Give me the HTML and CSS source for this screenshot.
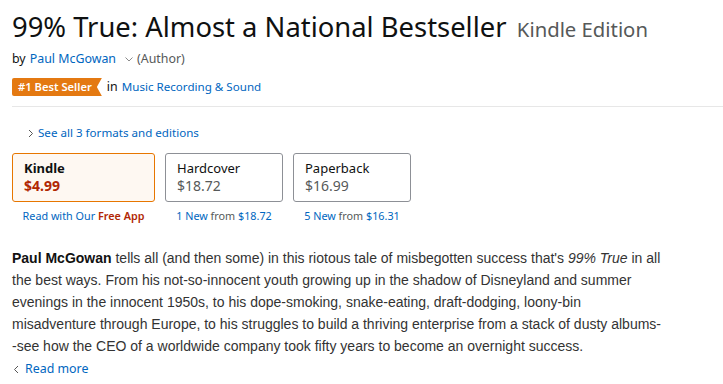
FILE: index.html
```html
<!DOCTYPE html>
<html lang="en">

<head>
    <meta charset="UTF-8">
    <meta name="viewport" content="width=device-width, initial-scale=1.0">
    <title>99% True: Almost a National Bestseller</title>
    <link rel="stylesheet" href="styles.css">
</head>

<body>

    <div class="product">
        <h1 class="title">
            <span class="title-main">99% True: Almost a National Bestseller</span>
            <span class="title-edition">Kindle Edition</span>
        </h1>

        <div class="byline">
            by <a href="#" class="link">Paul McGowan</a>
            <span class="caret">
                <svg width="8" height="5" viewBox="0 0 8 5"><path d="M0.5 0.5 L4 4 L7.5 0.5" fill="none" stroke="#8a8a8a" stroke-width="1"/></svg>
            </span>
            <span class="role">(Author)</span>
        </div>

        <div class="rank">
            <span class="badge">#1 Best Seller</span>
            <span class="rank-in">in</span>
            <a href="#" class="link">Music Recording &amp; Sound</a>
        </div>

        <hr class="divider">

        <div class="formats-toggle">
            <svg width="6" height="9" viewBox="0 0 6 9"><path d="M1 1 L4.5 4.5 L1 8" fill="none" stroke="#555" stroke-width="1"/></svg>
            <a href="#" class="link">See all 3 formats and editions</a>
        </div>

        <!-- format cards -->
        <div class="formats">
            <div class="format">
                <div class="format-box selected">
                    <div class="format-name">Kindle</div>
                    <div class="format-price">$4.99</div>
                </div>
                <div class="format-extra">
                    <a href="#" class="link">Read with Our <span class="free">Free App</span></a>
                </div>
            </div>
            <div class="format">
                <div class="format-box">
                    <div class="format-name">Hardcover</div>
                    <div class="format-price">$18.72</div>
                </div>
                <div class="format-extra">
                    <a href="#" class="link">1 New</a> <span class="from">from</span> <a href="#" class="link">$18.72</a>
                </div>
            </div>
            <div class="format">
                <div class="format-box">
                    <div class="format-name">Paperback</div>
                    <div class="format-price">$16.99</div>
                </div>
                <div class="format-extra">
                    <a href="#" class="link">5 New</a> <span class="from">from</span> <a href="#" class="link">$16.31</a>
                </div>
            </div>
        </div>

        <div class="description">
            <p><b>Paul McGowan</b> tells all (and then some) in this riotous tale of misbegotten success that's <i>99% True</i> in all the best ways. From his not-so-innocent youth growing up in the shadow of Disneyland and summer evenings in the innocent 1950s, to his dope-smoking, snake-eating, draft-dodging, loony-bin misadventure through Europe, to his struggles to build a thriving enterprise from a stack of dusty albums--see how the CEO of a worldwide company took fifty years to become an overnight success.</p>
        </div>

        <div class="read-more">
            <svg width="6" height="9" viewBox="0 0 6 9"><path d="M5 1 L1.5 4.5 L5 8" fill="none" stroke="#555" stroke-width="1"/></svg>
            <a href="#" class="link">Read more</a>
        </div>
    </div>

</body>

</html>
```

FILE: styles.css
```css
body {
    margin: 0;
    padding: 0;
    background-color: #ffffff;
    font-family: "Noto Sans", Arial, sans-serif;
    color: #0f1111;
}

.product {
    padding: 0 0 0 12px;
}

.link {
    color: #0066c0;
    text-decoration: none;
}

.title {
    margin: 0;
    padding-top: 7px;
    font-weight: 400;
    line-height: 36px;
    white-space: nowrap;
}

.title-main {
    font-size: 27.4px;
    color: #0f1111;
}

.title-edition {
    font-size: 20.3px;
    color: #565959;
    margin-left: 2px;
}

.byline {
    margin-top: 2px;
    font-size: 12.4px;
    line-height: 20px;
    display: flex;
    align-items: center;
    gap: 4px;
}

.byline .caret {
    margin-left: 5px;
    display: flex;
    align-items: center;
}

.byline .role {
    color: #565959;
}

.rank {
    margin-top: 9px;
    font-size: 11.6px;
    line-height: 18px;
    display: flex;
    align-items: center;
}

.badge {
    display: inline-block;
    height: 18px;
    line-height: 18px;
    padding: 0 10px 0 6px;
    background-color: #e47911;
    color: #ffffff;
    font-size: 11.2px;
    font-weight: 600;
    border-radius: 2px 0 0 2px;
    clip-path: polygon(0 0, 100% 0, calc(100% - 5px) 50%, 100% 100%, 0 100%);
}

.rank-in {
    margin: 0 4px 0 5px;
    font-size: 12.4px;
}

.divider {
    margin: 10px 0 0 0;
    border: 0;
    border-top: 1px solid #e7e7e7;
}

.formats-toggle {
    margin-top: 17px;
    padding-left: 16px;
    font-size: 11.6px;
    line-height: 18px;
    display: flex;
    align-items: center;
    gap: 4px;
}

.formats {
    display: flex;
    margin-top: 11px;
}

.format {
    display: flex;
    flex-direction: column;
    align-items: center;
    margin-right: 10px;
}

.format-box {
    box-sizing: border-box;
    height: 49px;
    padding: 5px 11px 0 11px;
    border: 1px solid #8d9096;
    border-radius: 3px;
    font-size: 13px;
    line-height: 18px;
    align-self: stretch;
}

.format:first-child .format-box {
    width: 143px;
}

.format .format-box {
    width: 118px;
}

.format-box.selected {
    border-color: #e77600;
    background-color: #fef8f2;
}

.format-name {
    color: #0f1111;
}

.format-price {
    color: #565959;
    font-size: 14px;
}

.selected .format-name,
.selected .format-price {
    font-weight: 700;
}

.selected .format-price {
    color: #b12704;
}

.format-extra {
    margin-top: 6px;
    font-size: 10.8px;
    line-height: 16px;
    white-space: nowrap;
}

.format-extra .free {
    color: #b12704;
    font-weight: 600;
}

.format-extra .from {
    color: #565959;
}

.description {
    margin-top: 23px;
    width: 653px;
    font-family: Arial, "Liberation Sans", sans-serif;
    font-size: 14px;
    line-height: 22px;
    color: #333333;
}

.description p {
    margin: 0;
}

.description b {
    color: #111111;
}

.read-more {
    margin-top: 1px;
    display: flex;
    align-items: center;
    gap: 6px;
    padding-left: 1px;
    font-size: 12.4px;
    line-height: 22px;
}
```
